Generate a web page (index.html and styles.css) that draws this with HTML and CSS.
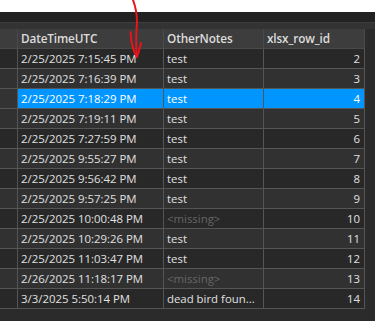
FILE: index.html
```html
<!DOCTYPE html>
<html>
<head>
<meta charset="utf-8">
<link rel="stylesheet" href="styles.css">
</head>
<body>
<div class="screen">
  <div class="top-gap"></div>
  <div class="toolbar"></div>
  <div class="strip"></div>
  <div class="grid-area">
    <div class="table">
      <div class="row head">
        <div class="cell idx"></div>
        <div class="cell">DateTimeUTC</div>
        <div class="cell">OtherNotes</div>
        <div class="cell">xlsx_row_id</div>
      </div>
      <div class="row odd"><div class="cell idx"></div><div class="cell">2/25/2025 7:15:45 PM</div><div class="cell">test</div><div class="cell num">2</div></div>
      <div class="row even"><div class="cell idx"></div><div class="cell">2/25/2025 7:16:39 PM</div><div class="cell">test</div><div class="cell num">3</div></div>
      <div class="row sel"><div class="cell idx"></div><div class="cell">2/25/2025 7:18:29 PM</div><div class="cell">test</div><div class="cell num">4</div></div>
      <div class="row even"><div class="cell idx"></div><div class="cell">2/25/2025 7:19:11 PM</div><div class="cell">test</div><div class="cell num">5</div></div>
      <div class="row odd"><div class="cell idx"></div><div class="cell">2/25/2025 7:27:59 PM</div><div class="cell">test</div><div class="cell num">6</div></div>
      <div class="row even"><div class="cell idx"></div><div class="cell">2/25/2025 9:55:27 PM</div><div class="cell">test</div><div class="cell num">7</div></div>
      <div class="row odd"><div class="cell idx"></div><div class="cell">2/25/2025 9:56:42 PM</div><div class="cell">test</div><div class="cell num">8</div></div>
      <div class="row even"><div class="cell idx"></div><div class="cell">2/25/2025 9:57:25 PM</div><div class="cell">test</div><div class="cell num">9</div></div>
      <div class="row odd"><div class="cell idx"></div><div class="cell">2/25/2025 10:00:48 PM</div><div class="cell missing">&lt;missing&gt;</div><div class="cell num">10</div></div>
      <div class="row even"><div class="cell idx"></div><div class="cell">2/25/2025 10:29:26 PM</div><div class="cell">test</div><div class="cell num">11</div></div>
      <div class="row odd"><div class="cell idx"></div><div class="cell">2/25/2025 11:03:47 PM</div><div class="cell">test</div><div class="cell num">12</div></div>
      <div class="row even"><div class="cell idx"></div><div class="cell">2/26/2025 11:18:17 PM</div><div class="cell missing">&lt;missing&gt;</div><div class="cell num">13</div></div>
      <div class="row odd"><div class="cell idx"></div><div class="cell">3/3/2025 5:50:14 PM</div><div class="cell">dead bird foun...</div><div class="cell num">14</div></div>
    </div>
    <div class="vscroll"></div>
  </div>
  <div class="bottom"></div>
  <svg class="arrow" width="20" height="62" viewBox="0 0 20 62">
    <path d="M4,0 C7,8 9,18 7.5,30 C7,40 7,50 8,57" fill="none" stroke="#e8141c" stroke-width="2" stroke-linecap="round"/>
    <path d="M1.5,32 C2,42 4,51 8,57 C9.5,53 11,47 12,43" fill="none" stroke="#e8141c" stroke-width="2" stroke-linecap="round" stroke-linejoin="round"/>
  </svg>
</div>
</body>
</html>
```
FILE: styles.css
```css
html, body {
  margin: 0;
  padding: 0;
  background: #ffffff;
}
.screen {
  position: relative;
  width: 375px;
  height: 321px;
  overflow: hidden;
  font-family: "Open Sans", "Noto Sans", sans-serif;
  font-size: 11.4px;
  background: #2b2b2b;
}
.top-gap {
  height: 12px;
  background: #ffffff;
}
.toolbar {
  height: 10px;
  background: #222222;
}
.strip {
  box-sizing: border-box;
  height: 7px;
  background: #333333;
  border-top: 1px solid #3e3e3e;
}
.grid-area {
  display: flex;
}
.table {
  width: 365px;
  display: flex;
  flex-direction: column;
}
.vscroll {
  flex: 1;
  background: #2b2b2b;
}
.row {
  display: grid;
  grid-template-columns: 18px 146px 100px 101px;
  height: 20px;
}
.cell {
  box-sizing: border-box;
  border-right: 1px solid #555555;
  border-bottom: 1px solid #555555;
  padding: 0 3px 0 3px;
  line-height: 19px;
  white-space: nowrap;
  overflow: hidden;
  color: #e0e0e0;
}
.cell.num {
  text-align: right;
  padding-right: 4px;
}
.head .cell {
  background: #3d3d3d;
  color: #dcdcdc;
  font-size: 11.8px;
  font-weight: 600;
  letter-spacing: -0.15px;
  border-color: #4a4a4a;
}
.odd .cell {
  background: #282828;
}
.even .cell {
  background: #313131;
}
.sel .cell {
  background: #0095ff;
  color: #ffffff;
}
.sel .cell.idx {
  background: #333333;
}
.cell.missing {
  color: #666666;
}
.bottom {
  height: 12px;
  background: #2b2b2b;
}
.arrow {
  position: absolute;
  left: 129px;
  top: 0;
}
```
